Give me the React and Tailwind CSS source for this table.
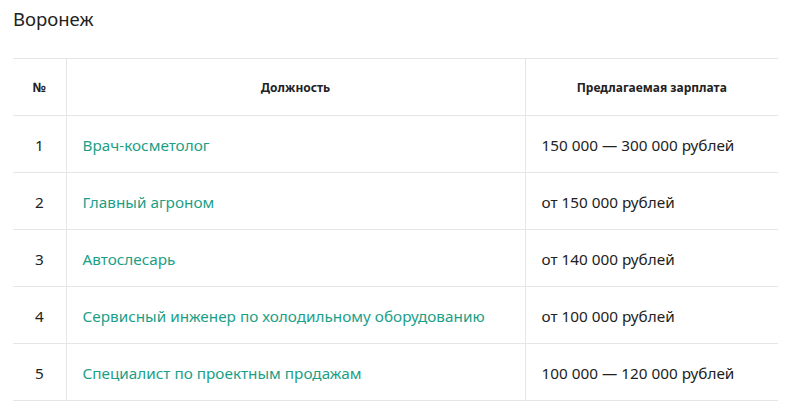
const rows = [
  { n: 1, title: 'Врач-косметолог', pay: '150 000 — 300 000 рублей' },
  { n: 2, title: 'Главный агроном', pay: 'от 150 000 рублей' },
  { n: 3, title: 'Автослесарь', pay: 'от 140 000 рублей' },
  { n: 4, title: 'Сервисный инженер по холодильному оборудованию', pay: 'от 100 000 рублей' },
  { n: 5, title: 'Специалист по проектным продажам', pay: '100 000 — 120 000 рублей' },
];

const App = () => {
  return (
    <div className="bg-white w-[789px] h-[403px] overflow-hidden pl-[13px] text-[#222] font-['Noto_Sans',sans-serif]">
      <h2 className="text-[18.5px] leading-[26px] pt-[6px] h-[58px] font-normal">Воронеж</h2>

      <table className="w-[765px] border-collapse table-fixed">
        <thead>
          <tr className="h-[57px] border-y border-[#e6e6e6]">
            <th className="w-[53px] pt-[2px] text-[13px] font-bold text-center">№</th>
            <th className="w-[459px] pt-[2px] text-[12px] font-bold text-center border-x border-[#e6e6e6]">Должность</th>
            <th className="pt-[2px] text-[12px] font-bold text-center">Предлагаемая зарплата</th>
          </tr>
        </thead>
        <tbody>
          {rows.map((r) => (
            <tr key={r.n} className="h-[57px] border-b border-[#e6e6e6] text-[15.3px]">
              <td className="pt-[2px] text-center">{r.n}</td>
              <td className="pt-[2px] px-[16px] border-x border-[#e6e6e6]">
                <a href="#" className="text-[#1ba087]">{r.title}</a>
              </td>
              <td className="pt-[2px] px-[16px]">{r.pay}</td>
            </tr>
          ))}
        </tbody>
      </table>
    </div>
  );
};

export default App;
